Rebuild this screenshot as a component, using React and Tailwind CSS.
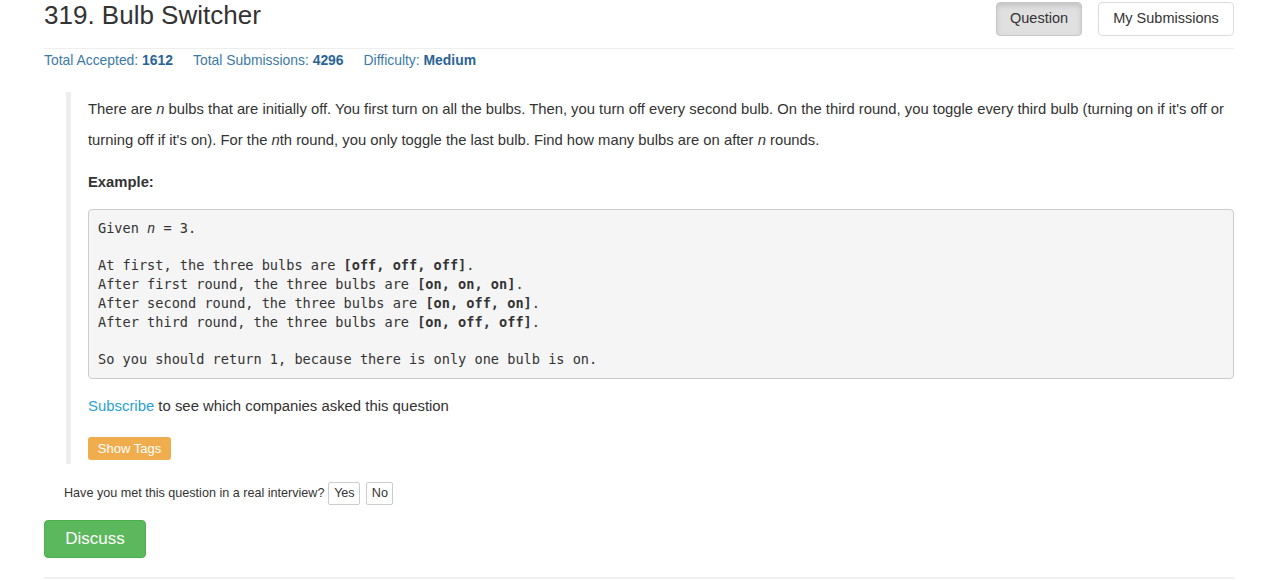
import React from "react";

const sans = { fontFamily: '"Liberation Sans", Arial, Helvetica, sans-serif' };

export default function App() {
  return (
    <div className="w-[1280px] h-[580px] bg-white overflow-hidden text-[#333]" style={sans}>
      <div className="ml-[44px] w-[1190px]">
        <div className="flex items-start justify-between h-[49px] border-b border-[#eee]">
          <h1 className="text-[26px] leading-[30px] mt-[0px] text-[#333] font-normal">319. Bulb Switcher</h1>
          <div className="flex gap-[16px] mt-[2px]">
            <button className="h-[34px] px-[12px] text-[14.5px] text-[#333] bg-[#e0e0e0] border border-[#c8c8c8] rounded-[4px] shadow-[inset_0_3px_5px_rgba(0,0,0,0.125)] w-[86px]">Question</button>
            <button className="h-[34px] px-[12px] text-[14.5px] text-[#333] bg-white border border-[#ddd] rounded-[4px] w-[136px]">My Submissions</button>
          </div>
        </div>
        <div className="flex gap-[20px] text-[13.9px] text-[#3d7aa8] mt-[1px] leading-[20px]">
          <span>Total Accepted: <b className="text-[#2a6496]">1612</b></span>
          <span>Total Submissions: <b className="text-[#2a6496]">4296</b></span>
          <span>Difficulty: <b className="text-[#2a6496]">Medium</b></span>
        </div>
        <div className="ml-[22px] mt-[22px] border-l-[5px] border-[#eee] pl-[17px] pb-[4px] pt-[2px]">
          <p className="text-[14.8px] leading-[31px]">
            There are <i>n</i> bulbs that are initially off. You first turn on all the bulbs. Then, you turn off every second bulb. On the third round, you toggle every third bulb (turning on if it's off or turning off if it's on). For the <i>n</i>th round, you only toggle the last bulb. Find how many bulbs are on after <i>n</i> rounds.
          </p>
          <p className="text-[14.8px] font-bold mt-[16px] leading-[20px]">Example:</p>
          <pre
            className="mt-[17px] bg-[#f5f5f5] border border-[#ccc] rounded-[4px] px-[9px] py-[9px] text-[13.6px] leading-[18.7px] text-[#333]"
            style={{ fontFamily: '"DejaVu Sans Mono", Menlo, monospace' }}
          >
{"Given "}<i>n</i>{" = 3.\n\nAt first, the three bulbs are "}<b>[off, off, off]</b>{".\nAfter first round, the three bulbs are "}<b>[on, on, on]</b>{".\nAfter second round, the three bulbs are "}<b>[on, off, on]</b>{".\nAfter third round, the three bulbs are "}<b>[on, off, off]</b>{".\n\nSo you should return 1, because there is only one bulb is on."}
          </pre>
          <p className="text-[14.9px] leading-[20px] mt-[17px]">
            <span className="text-[#2a9fd6]">Subscribe</span> to see which companies asked this question
          </p>
          <button className="mt-[21px] h-[23px] px-[9px] bg-[#f0ad4e] text-white text-[13px] rounded-[3px] leading-[23px] w-[83px]">Show Tags</button>
        </div>
        <div className="ml-[20px] mt-[18px] flex items-center text-[12.6px] text-[#333]">
          <span>Have you met this question in a real interview?</span>
          <button className="ml-[4px] h-[23px] w-[32px] border border-[#ccc] rounded-[2px] bg-white text-[12.6px]">Yes</button>
          <button className="ml-[6px] h-[23px] w-[27px] border border-[#ccc] rounded-[2px] bg-white text-[12.6px]">No</button>
        </div>
        <button className="mt-[15px] h-[38px] w-[102px] bg-[#5cb85c] text-white text-[17px] rounded-[4px] border border-[#4cae4c]">Discuss</button>
        <div className="mt-[19px] border-t-[2px] border-[#f0f0f0]"></div>
      </div>
    </div>
  );
}
